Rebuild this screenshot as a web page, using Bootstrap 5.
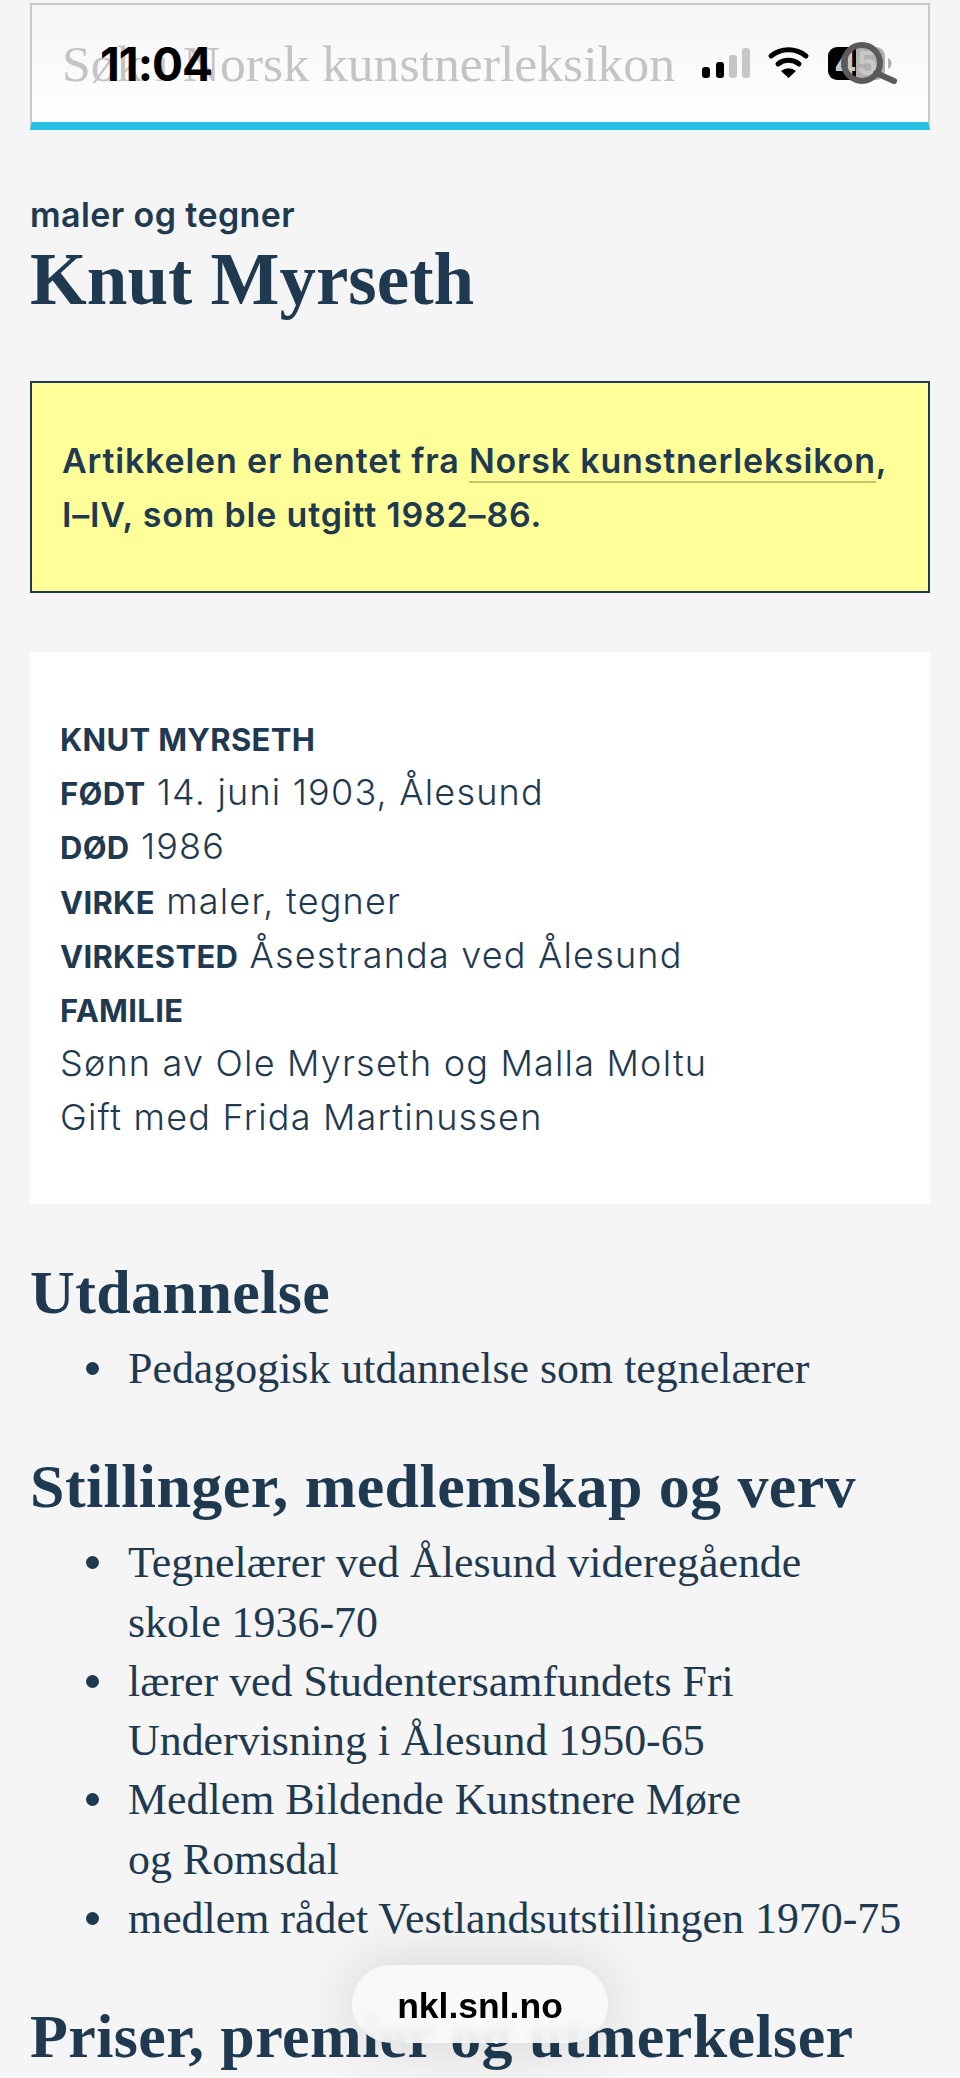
<!DOCTYPE html>
<html lang="no">
<head>
    <meta charset="UTF-8">
    <meta name="viewport" content="width=device-width, initial-scale=1.0">
    <title>Knut Myrseth</title>
    <link href="https://cdn.jsdelivr.net/npm/bootstrap@5.3.2/dist/css/bootstrap.min.css" rel="stylesheet">
    <style>
        html, body { height: 2078px; overflow: hidden; }
        body {
            background: #f5f5f5;
            color: #1f3a50;
            font-family: "Inter", "Liberation Sans", sans-serif;
            position: relative;
        }
        .page-wrap { padding: 3px 30px 0; }
        .search-box {
            height: 127px;
            background: linear-gradient(180deg, #f5f5f5 0%, #fff 100%);
            border: 2px solid #c9c9c9;
            border-bottom: 8px solid #29c0e8;
            padding-left: 30px;
        }
        .search-text {
            font-family: "Liberation Serif", serif;
            font-size: 51.7px;
            color: #c4c4c4;
            line-height: 1;
        }
        .status-time {
            position: absolute; left: 100px; top: 39px;
            font-weight: 700; font-size: 46px; line-height: 50px; color: #000;
            letter-spacing: -1px;
        }
        .status-icons { position: absolute; left: 690px; top: 30px; }
        .kicker { margin-top: 65px; font-size: 34px; font-weight: 600; line-height: 40px; letter-spacing: .4px; }
        .page-title {
            font-family: "Liberation Serif", serif;
            font-weight: 700; font-size: 73px; line-height: 84px; margin: 3px 0 0;
            color: #1f3a50;
        }
        .notice {
            margin-top: 59px;
            height: 212px;
            background: #ffff99;
            border: 2.5px solid #1f3a50;
            padding: 51px 30px 0;
            font-size: 34px; font-weight: 600; line-height: 54px;
            letter-spacing: .8px;
        }
        .notice a { color: inherit; text-decoration: none; border-bottom: 2px solid #c5c46c; }
        .facts {
            margin-top: 59px;
            height: 552px;
            background: #fff;
            padding: 59px 30px 0;
            font-size: 36px; line-height: 54.2px;
            letter-spacing: 1.2px;
            font-weight: 300;
        }
        .facts b { font-size: 31px; font-weight: 700; letter-spacing: .3px; line-height: 1; }
        .sec-head {
            font-family: "Liberation Serif", serif;
            font-weight: 700; font-size: 62px; line-height: 66px; margin: 0 0 14px;
            letter-spacing: .4px;
            color: #1f3a50;
        }
        .sec-list {
            font-family: "Liberation Serif", serif;
            font-size: 43.9px; line-height: 59.3px;
            padding-left: 98px; margin: 0;
            list-style: none;
        }
        .sec-list li { position: relative; }
        .sec-list li::before {
            content: ""; position: absolute; left: -42px; top: 23px;
            width: 13px; height: 13px; border-radius: 50%; background: #1f3a50;
        }
        .sec-gap { margin-top: 55px; }
        .pill {
            position: absolute; left: 352px; top: 1965px; width: 256px; height: 78px;
            background: rgba(250, 250, 250, .9);
            backdrop-filter: blur(6px);
            border-radius: 39px;
            box-shadow: 0 0 60px rgba(0,0,0,.14);
            font-family: "Liberation Sans", sans-serif;
            font-weight: 700; font-size: 35.5px; color: #000;
            padding-top: 15px;
        }
    </style>
</head>
<body>
    <div class="page-wrap">
        <div class="search-box d-flex align-items-center">
            <span class="search-text">Søk i Norsk kunstnerleksikon</span>
        </div>

        <div class="kicker">maler og tegner</div>
        <h1 class="page-title">Knut Myrseth</h1>

        <div class="notice">
            Artikkelen er hentet fra <a href="#">Norsk kunstnerleksikon</a>,<br>I–IV, som ble utgitt 1982–86.
        </div>

        <div class="facts">
            <b>KNUT MYRSETH</b><br>
            <b>FØDT</b> 14. juni 1903, Ålesund<br>
            <b>DØD</b> 1986<br>
            <b>VIRKE</b> maler, tegner<br>
            <b>VIRKESTED</b> Åsestranda ved Ålesund<br>
            <b>FAMILIE</b><br>
            Sønn av Ole Myrseth og Malla Moltu<br>
            Gift med Frida Martinussen
        </div>

        <h2 class="sec-head sec-gap">Utdannelse</h2>
        <ul class="sec-list">
            <li>Pedagogisk utdannelse som tegnelærer</li>
        </ul>

        <h2 class="sec-head sec-gap">Stillinger, medlemskap og verv</h2>
        <ul class="sec-list">
            <li>Tegnelærer ved Ålesund videregående<br>skole 1936-70</li>
            <li>lærer ved Studentersamfundets Fri<br>Undervisning i Ålesund 1950-65</li>
            <li>Medlem Bildende Kunstnere Møre<br>og Romsdal</li>
            <li>medlem rådet Vestlandsutstillingen 1970-75</li>
        </ul>

        <h2 class="sec-head sec-gap">Priser, premier og utmerkelser</h2>
    </div>

    <div class="status-time">11:04</div>
    <!-- status bar sits over the search field, same as the phone capture -->
    <svg class="status-icons" width="220" height="60" viewBox="690 30 220 60">
        <rect x="702" y="67" width="8" height="11" rx="3" fill="#000"/>
        <rect x="716" y="62" width="8" height="16" rx="3" fill="#000"/>
        <rect x="729" y="55" width="8" height="23" rx="3" fill="#c6c6c6"/>
        <rect x="742" y="48" width="8" height="30" rx="3" fill="#c6c6c6"/>
        <path d="M771 56a28 28 0 0 1 35 0" fill="none" stroke="#000" stroke-width="5" stroke-linecap="round"/>
        <path d="M778 64a17 17 0 0 1 21 0" fill="none" stroke="#000" stroke-width="5" stroke-linecap="round"/>
        <path d="M781 71a12 12 0 0 1 15 0l-7.500 7z" fill="#000"/>
        <path d="M837 47h19v33h-19a9 9 0 0 1-9-9v-15a9 9 0 0 1 9-9z" fill="#000"/>
        <path d="M856 47h20a9 9 0 0 1 9 9v15a9 9 0 0 1-9 9h-20z" fill="#b0b0b0"/>
        <path d="M888 58a6 6 0 0 1 0 11z" fill="#b0b0b0"/>
        <text x="856" y="75" text-anchor="middle" font-family="Inter, sans-serif" font-weight="700" font-size="33" fill="#c8c8c8">45</text>
        <circle cx="862" cy="63" r="18" fill="none" stroke="#5a5a5a" stroke-width="6"/>
        <path d="M876 73l18 8" fill="none" stroke="#5a5a5a" stroke-width="6" stroke-linecap="round"/>
    </svg>
    <div class="pill text-center">nkl.snl.no</div>

    <script src="https://cdn.jsdelivr.net/npm/bootstrap@5.3.2/dist/js/bootstrap.bundle.min.js"></script>
</body>
</html>
